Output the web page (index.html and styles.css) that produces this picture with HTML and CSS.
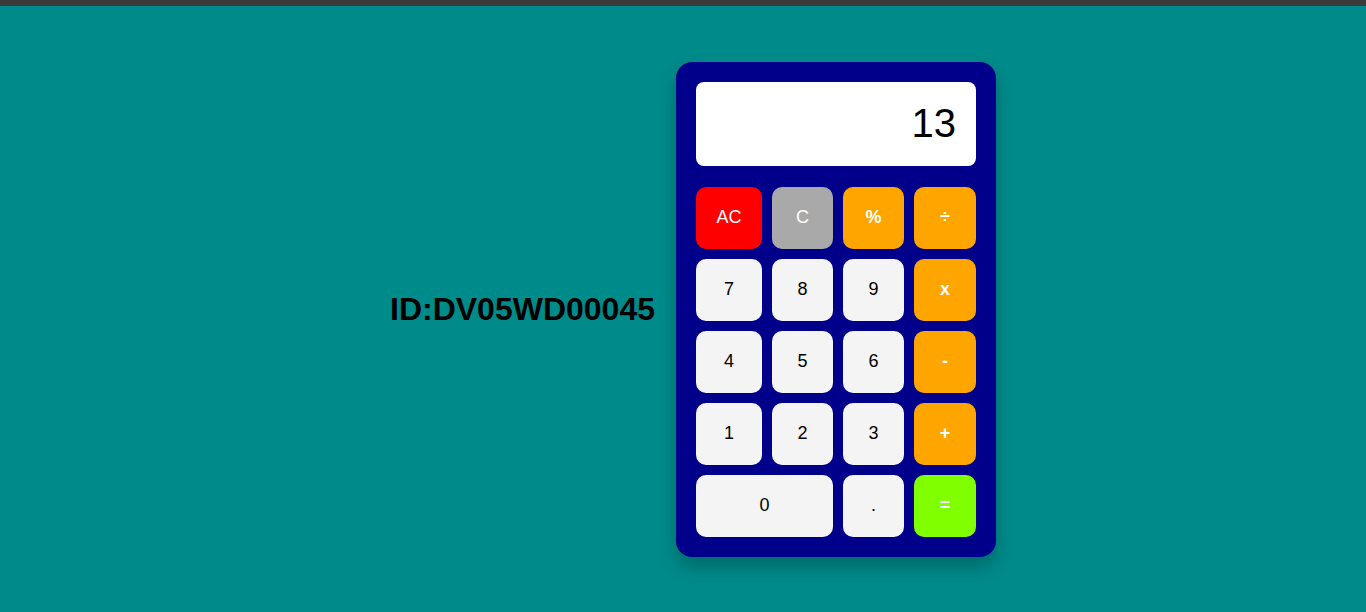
FILE: index.html
```html
<!DOCTYPE html>
<html lang="en">
<head>
<meta charset="utf-8">
<title>Calculator</title>
<link rel="stylesheet" href="styles.css">
</head>
<body>
<div class="topbar"></div>
<main class="page">
  <h1 class="student-id">ID:DV05WD00045</h1>
  <div class="calculator">
    <div class="display">13</div>
    <div class="keys">
      <button class="key key-clear">AC</button>
      <button class="key key-del">C</button>
      <button class="key key-op">%</button>
      <button class="key key-op">÷</button>
      <button class="key">7</button>
      <button class="key">8</button>
      <button class="key">9</button>
      <button class="key key-op">x</button>
      <button class="key">4</button>
      <button class="key">5</button>
      <button class="key">6</button>
      <button class="key key-op">-</button>
      <button class="key">1</button>
      <button class="key">2</button>
      <button class="key">3</button>
      <button class="key key-op">+</button>
      <button class="key key-zero">0</button>
      <button class="key">.</button>
      <button class="key key-equals">=</button>
    </div>
  </div>
</main>
</body>
</html>
```

FILE: styles.css
```css
* {
  box-sizing: border-box;
}

html, body {
  margin: 0;
  padding: 0;
  height: 100%;
}

body {
  background: #008b8b;
  font-family: "Liberation Sans", Arial, sans-serif;
  display: flex;
  flex-direction: column;
}

.topbar {
  height: 6px;
  background: #3a3a3a;
  flex: none;
}

.page {
  flex: 1;
  display: flex;
  align-items: center;
  justify-content: center;
  padding-left: 20px;
}

.student-id {
  margin: 0 21px 0 0;
  font-size: 32px;
  font-weight: bold;
  color: #000;
}

.calculator {
  width: 320px;
  background: #00008b;
  border-radius: 16px;
  padding: 20px;
  box-shadow: 0 10px 20px rgba(0, 0, 0, 0.25);
}

.display {
  height: 84px;
  background: #fff;
  border-radius: 8px;
  margin-bottom: 21px;
  display: flex;
  align-items: center;
  justify-content: flex-end;
  padding-right: 20px;
  font-size: 40px;
  color: #000;
}

.keys {
  display: grid;
  grid-template-columns: 66px 61px 61px 62px;
  grid-auto-rows: 62px;
  gap: 10px;
}

.key {
  border: none;
  border-radius: 10px;
  background: #f4f4f4;
  color: #000;
  font-family: "Liberation Sans", Arial, sans-serif;
  font-size: 18px;
  padding: 0;
}

.key-clear {
  background: #ff0000;
  color: #fff;
}

.key-del {
  background: #a9a9a9;
  color: #fff;
}

.key-op {
  background: #ffa500;
  color: #fff;
  font-weight: bold;
}

.key-equals {
  background: #7fff00;
  color: #fff;
  font-weight: bold;
}

.key-zero {
  grid-column: span 2;
}
```
